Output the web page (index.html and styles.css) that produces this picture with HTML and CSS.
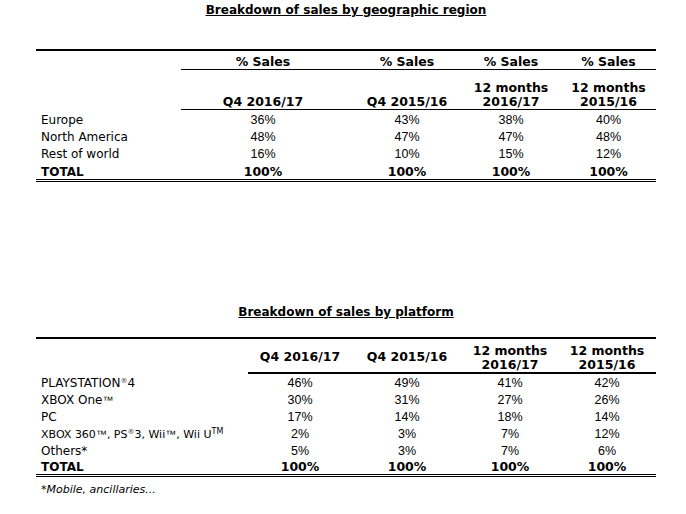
FILE: index.html
```html
<!DOCTYPE html>
<html>
<head>
<meta charset="utf-8">
<link rel="stylesheet" href="styles.css">
</head>
<body>
<div class="page">
  <h2 class="title">Breakdown of sales by geographic region</h2>
  <div class="tbl geo">
    <div class="row head1">
      <div class="cell lab"></div>
      <div class="cell ul">% Sales</div>
      <div class="cell ul">% Sales</div>
      <div class="cell ul">% Sales</div>
      <div class="cell ul c4">% Sales</div>
    </div>
    <div class="row head2">
      <div class="cell lab"></div>
      <div class="cell ul">Q4 2016/17</div>
      <div class="cell ul">Q4 2015/16</div>
      <div class="cell ul">12 months<br>2016/17</div>
      <div class="cell ul c4">12 months<br>2015/16</div>
    </div>
    <div class="row data">
      <div class="cell lab">Europe</div>
      <div class="cell num">36%</div>
      <div class="cell num">43%</div>
      <div class="cell num">38%</div>
      <div class="cell num c4">40%</div>
    </div>
    <div class="row data">
      <div class="cell lab">North America</div>
      <div class="cell num">48%</div>
      <div class="cell num">47%</div>
      <div class="cell num">47%</div>
      <div class="cell num c4">48%</div>
    </div>
    <div class="row data">
      <div class="cell lab">Rest of world</div>
      <div class="cell num">16%</div>
      <div class="cell num">10%</div>
      <div class="cell num">15%</div>
      <div class="cell num c4">12%</div>
    </div>
    <div class="row total">
      <div class="cell lab">TOTAL</div>
      <div class="cell">100%</div>
      <div class="cell">100%</div>
      <div class="cell">100%</div>
      <div class="cell c4">100%</div>
    </div>
  </div>

  <h2 class="title title2">Breakdown of sales by platform</h2>
  <div class="tbl plat">
    <div class="row phead">
      <div class="cell lab"></div>
      <div class="cell ul mid">Q4 2016/17</div>
      <div class="cell ul mid">Q4 2015/16</div>
      <div class="cell ul">12 months<br>2016/17</div>
      <div class="cell ul">12 months<br>2015/16</div>
    </div>
    <div class="row pdata">
      <div class="cell lab">PLAYSTATION<sup class="reg">®</sup>4</div>
      <div class="cell num">46%</div>
      <div class="cell num">49%</div>
      <div class="cell num">41%</div>
      <div class="cell num">42%</div>
    </div>
    <div class="row pdata">
      <div class="cell lab">XBOX One<span class="tm">™</span></div>
      <div class="cell num">30%</div>
      <div class="cell num">31%</div>
      <div class="cell num">27%</div>
      <div class="cell num">26%</div>
    </div>
    <div class="row pdata">
      <div class="cell lab">PC</div>
      <div class="cell num">17%</div>
      <div class="cell num">14%</div>
      <div class="cell num">18%</div>
      <div class="cell num">14%</div>
    </div>
    <div class="row pdata">
      <div class="cell lab small">XBOX 360<span class="tm">™</span>, PS<sup class="reg">®</sup>3, Wii<span class="tm">™</span>, Wii U<sup class="tm2">TM</sup></div>
      <div class="cell num">2%</div>
      <div class="cell num">3%</div>
      <div class="cell num">7%</div>
      <div class="cell num">12%</div>
    </div>
    <div class="row pdata">
      <div class="cell lab">Others*</div>
      <div class="cell num">5%</div>
      <div class="cell num">3%</div>
      <div class="cell num">7%</div>
      <div class="cell num">6%</div>
    </div>
    <div class="row ptotal">
      <div class="cell lab">TOTAL</div>
      <div class="cell">100%</div>
      <div class="cell">100%</div>
      <div class="cell">100%</div>
      <div class="cell">100%</div>
    </div>
  </div>
  <p class="note">*Mobile, ancillaries...</p>
</div>
</body>
</html>
```

FILE: styles.css
```css
html, body {
  margin: 0;
  padding: 0;
  background: #ffffff;
}
body {
  font-family: "DejaVu Sans", Verdana, sans-serif;
  font-size: 12px;
  color: #000000;
}
.page {
  width: 686px;
}
.title {
  margin: 0;
  padding-top: 3px;
  font-size: 12px;
  line-height: 14px;
  font-weight: bold;
  text-align: center;
  text-decoration: underline;
  width: 620px;
  margin-left: 36px;
}
.title2 {
  margin-top: 120px;
}
.tbl {
  width: 620px;
  margin-left: 36px;
  margin-top: 32px;
  border-top: 2px solid #000;
  border-bottom: 3px double #000;
}
.plat {
  margin-top: 18px;
}
.row {
  display: grid;
}
.geo .row {
  grid-template-columns: 145px 164px 124px 84px 103px;
}
.plat .row {
  grid-template-columns: 212px 104px 110px 96px 98px;
}
.cell {
  text-align: center;
  font-weight: bold;
  font-size: 12.5px;
  line-height: 14px;
}
.cell.lab {
  text-align: left;
  padding-left: 5px;
  font-weight: normal;
  font-size: 12px;
}
.total .cell.lab, .ptotal .cell.lab {
  font-weight: bold;
}
.geo .c4 {
  padding-left: 8px;
}
.num {
  font-family: "Liberation Sans", Arial, sans-serif;
  font-weight: normal;
}
.cell.num {
  font-size: 12.5px;
}
.head1 .cell {
  height: 14px;
  padding-top: 4px;
}
.head1 .ul, .head2 .ul {
  border-bottom: 1px solid #000;
}
.head2 .cell {
  height: 39px;
  display: flex;
  flex-direction: column;
  justify-content: flex-end;
}
.data .cell {
  padding-top: 3px;
  height: 14px;
}
.total .cell {
  padding-top: 4px;
  height: 14px;
}
.phead .cell {
  height: 33px;
  display: flex;
  flex-direction: column;
  justify-content: flex-end;
}
.phead .cell.mid {
  justify-content: center;
  padding-top: 2px;
  height: 31px;
}
.phead .ul {
  border-bottom: 2px solid #000;
}
.pdata .cell {
  padding-top: 2px;
  height: 15px;
  line-height: 15px;
}
.ptotal .cell {
  padding-top: 1px;
  height: 14px;
}
.cell.small {
  font-size: 11px;
}
sup {
  line-height: 0;
}
.reg {
  font-size: 7px;
  color: #444;
  vertical-align: 4px;
}
.tm {
  font-family: "Liberation Sans", Arial, sans-serif;
  font-size: 11px;
}
.tm2 {
  font-size: 8px;
  vertical-align: 4px;
}
.note {
  margin: 6px 0 0 41px;
  font-style: italic;
  font-size: 11px;
  line-height: 14px;
}
```
